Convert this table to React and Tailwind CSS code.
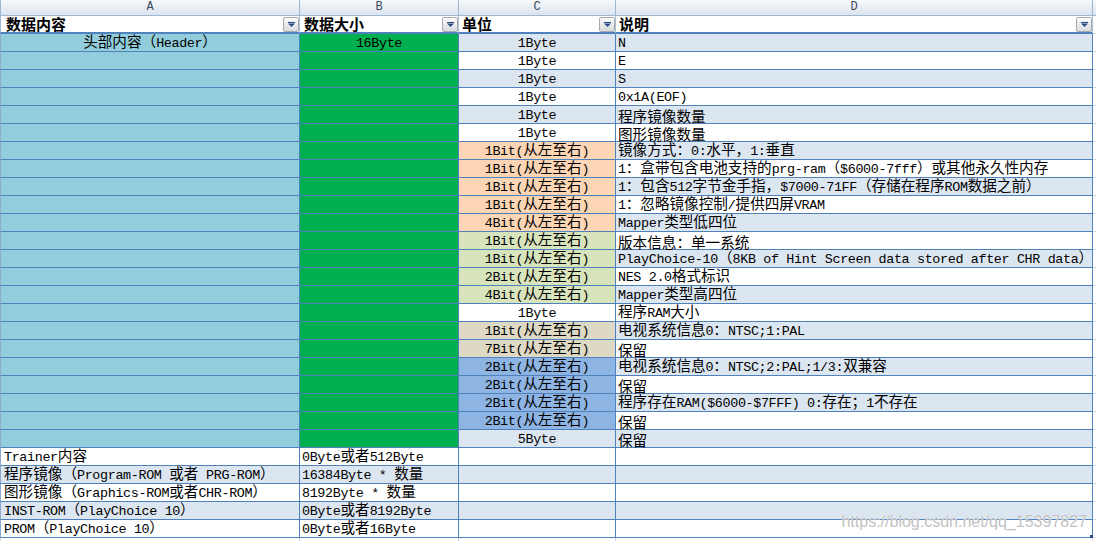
import React from "react";

const CJK = /([\u2E80-\u9FFF\u3000-\u303F\uFF00-\uFFEF]+)/;

// Excel text: CJK runs full width, Latin runs half width
function Txt({ s, bold }) {
  return (
    <span className="block leading-[14px]">
      {s
        .split(CJK)
        .filter(Boolean)
        .map((part, i) =>
          CJK.test(part) ? (
            <span
              key={i}
              className={
                bold
                  ? "font-['Noto_Sans_CJK_SC',sans-serif] text-[15px] font-bold"
                  : "font-['Noto_Sans_CJK_SC',sans-serif] text-[14.6px]"
              }
            >
              {part}
            </span>
          ) : (
            <span
              key={i}
              className="whitespace-pre font-['Liberation_Mono',monospace] text-[13.4px] tracking-[-0.35px]"
            >
              {part}
            </span>
          )
        )}
    </span>
  );
}

const fills = {
  peach: "bg-[#fcd5b4]",
  green: "bg-[#d8e4bc]",
  tan: "bg-[#ddd9c4]",
  blue: "bg-[#8db4e2]",
};

const headerRows = [
  ["1Byte", "N"],
  ["1Byte", "E"],
  ["1Byte", "S"],
  ["1Byte", "0x1A(EOF)"],
  ["1Byte", "程序镜像数量"],
  ["1Byte", "图形镜像数量"],
  ["1Bit(从左至右)", "镜像方式：0:水平，1:垂直", "peach"],
  ["1Bit(从左至右)", "1：盒带包含电池支持的prg-ram（$6000-7fff）或其他永久性内存", "peach"],
  ["1Bit(从左至右)", "1：包含512字节金手指，$7000-71FF（存储在程序ROM数据之前）", "peach"],
  ["1Bit(从左至右)", "1：忽略镜像控制/提供四屏VRAM", "peach"],
  ["4Bit(从左至右)", "Mapper类型低四位", "peach"],
  ["1Bit(从左至右)", "版本信息：单一系统", "green"],
  ["1Bit(从左至右)", "PlayChoice-10（8KB of Hint Screen data stored after CHR data）", "green"],
  ["2Bit(从左至右)", "NES 2.0格式标识", "green"],
  ["4Bit(从左至右)", "Mapper类型高四位", "green"],
  ["1Byte", "程序RAM大小"],
  ["1Bit(从左至右)", "电视系统信息0：NTSC;1:PAL", "tan"],
  ["7Bit(从左至右)", "保留", "tan"],
  ["2Bit(从左至右)", "电视系统信息0：NTSC;2:PAL;1/3:双兼容", "blue"],
  ["2Bit(从左至右)", "保留", "blue"],
  ["2Bit(从左至右)", "程序存在RAM($6000-$7FFF) 0:存在；1不存在", "blue"],
  ["2Bit(从左至右)", "保留", "blue"],
  ["5Byte", "保留"],
];

const tailRows = [
  ["Trainer内容", "0Byte或者512Byte"],
  ["程序镜像（Program-ROM 或者 PRG-ROM）", "16384Byte * 数量"],
  ["图形镜像（Graphics-ROM或者CHR-ROM）", "8192Byte * 数量"],
  ["INST-ROM（PlayChoice 10）", "0Byte或者8192Byte"],
  ["PROM（PlayChoice 10）", "0Byte或者16Byte"],
];

const band = (i) => (i % 2 === 0 ? "bg-[#dce6f1]" : "bg-white");

function FilterButton() {
  return (
    <div className="ml-auto flex h-[15px] w-[16px] shrink-0 items-center justify-center rounded-[2px] border border-[#a7abb0] bg-linear-to-b from-[#fbfbfb] to-[#d9dbde]">
      <svg width="7" height="5" viewBox="0 0 7 5">
        <rect x="0" y="0" width="7" height="1" fill="#2b4a85" />
        <polygon points="0,1.5 7,1.5 3.5,5" fill="#2b4a85" />
      </svg>
    </div>
  );
}

function Cell({ w, className = "", children }) {
  return (
    <div
      className={`flex h-full shrink-0 items-end overflow-visible whitespace-nowrap border-r border-b border-[#4f81bd] text-black ${w} ${className}`}
    >
      {children}
    </div>
  );
}

function Row({ children }) {
  return (
    <div className="flex h-[18px]">
      {children}
      <div className="h-full flex-1 border-b border-[#d0d7e5] bg-white" />
    </div>
  );
}

export default function App() {
  return (
    <div className="relative h-[541px] w-[1096px] overflow-hidden bg-white">
      {/* column letters */}
      <div className="flex h-[16px] border-b border-[#9eb6ce] bg-linear-to-b from-[#f6f8fb] to-[#dce4ef] font-['Liberation_Mono',monospace] text-[12px] leading-[15px] text-[#3d4a5c]">
        <div className="w-[300px] shrink-0 border-r border-l border-[#9eb6ce] text-center">A</div>
        <div className="w-[159px] shrink-0 border-r border-[#9eb6ce] text-center">B</div>
        <div className="w-[157px] shrink-0 border-r border-[#9eb6ce] text-center">C</div>
        <div className="w-[477px] shrink-0 border-r border-[#9eb6ce] text-center">D</div>
        <div className="flex-1" />
      </div>

      {/* filter header row */}
      <div className="flex h-[18px]">
        {[
          ["数据内容", "w-[300px] border-l pl-[5px]"],
          ["数据大小", "w-[159px] pl-[4px]"],
          ["单位", "w-[157px] pl-[3px]"],
          ["说明", "w-[477px] pl-[3px]"],
        ].map(([label, cls]) => (
          <div
            key={label}
            className={`flex h-full shrink-0 items-center border-r border-b-2 border-r-[#a9bfd6] border-l-[#9eb6ce] border-b-[#4f81bd] bg-white text-black ${cls}`}
          >
            <Txt s={label} bold />
            <FilterButton />
          </div>
        ))}
        <div className="h-full flex-1 border-b border-[#d0d7e5]" />
      </div>

      {/* header block rows */}
      {headerRows.map(([unit, desc, fill], i) => (
        <Row key={i}>
          <Cell w="w-[300px] border-l border-l-[#8eaacc] justify-center" className="bg-[#92cddc]">
            {i === 0 && <Txt s="头部内容（Header）" />}
          </Cell>
          <Cell w="w-[159px] justify-center" className="bg-[#00b050]">
            {i === 0 && <Txt s="16Byte" />}
          </Cell>
          <Cell w="w-[157px] justify-center" className={fill ? fills[fill] : band(i)}>
            <Txt s={unit} />
          </Cell>
          <Cell w="w-[477px] pl-[2px]" className={`relative z-10 ${band(i)}`}>
            <Txt s={desc} />
          </Cell>
        </Row>
      ))}

      {/* remaining sections */}
      {tailRows.map(([name, size], j) => {
        const i = headerRows.length + j;
        return (
          <Row key={name}>
            <Cell w="w-[300px] border-l border-l-[#8eaacc] pl-[3px]" className={band(i)}>
              <Txt s={name} />
            </Cell>
            <Cell w="w-[159px] pl-[2px]" className={band(i)}>
              <Txt s={size} />
            </Cell>
            <Cell w="w-[157px]" className={band(i)} />
            <Cell w="w-[477px]" className={band(i)} />
          </Row>
        );
      })}

      {/* partial next row */}
      <div className="flex h-[4px]">
        <div className="w-[300px] shrink-0 border-r border-l border-[#d0d7e5]" />
        <div className="w-[159px] shrink-0 border-r border-[#d0d7e5]" />
        <div className="w-[157px] shrink-0 border-r border-[#d0d7e5]" />
        <div className="w-[477px] shrink-0 border-r border-[#d0d7e5]" />
      </div>

      {/* table resize handle */}
      <div className="absolute left-[1090px] top-[535px] h-[3px] w-[3px] bg-[#2b4a85]" />

      {/* watermark */}
      <div className="pointer-events-none absolute right-[9px] top-[512px] font-['Liberation_Sans',sans-serif] text-[16px] leading-[20px] text-[#c2c2c2] [text-shadow:0_0_1px_#ffffff]">
        https://blog.csdn.net/qq_15397827
      </div>
    </div>
  );
}
